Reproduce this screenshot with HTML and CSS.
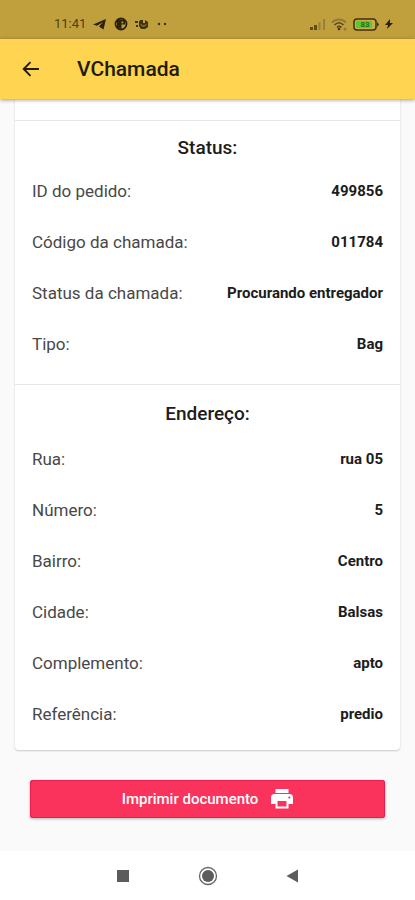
FILE: index.html
```html
<!DOCTYPE html>
<html lang="pt-BR">
<head>
<meta charset="utf-8">
<meta name="viewport" content="width=device-width, initial-scale=1">
<title>VChamada</title>
<link rel="stylesheet" href="styles.css">
</head>
<body>
<div class="statusbar">
  <div class="status-group">
    <span class="clock">11:41</span>
    <svg width="14" height="12" viewBox="0 0 14 12"><path d="M13 1 0 6.500l4 1.200L10 4 6 8.500l4.500 3z" fill="#2b230c"/></svg>
    <svg width="14" height="14" viewBox="0 0 14 14"><circle cx="7" cy="7" r="5.500" fill="none" stroke="#2b230c" stroke-width="1.800"/><path d="M3 2.500h4.500V12L3 10.500zM7 3h4v4.500H7z" fill="#2b230c"/><path d="M7.500 4.500h1.800v1.800H7.500z" fill="#c0a03c"/></svg>
    <svg width="14" height="12" viewBox="0 0 14 12"><path d="M0 3h3v2H0zM1 7h2v2H1zM5 2h3v3h2V2l3 2v5l-3 2H6L4 8V4z" fill="#40340f"/><path d="M6 6.500c1 2 4 2 5 0" fill="none" stroke="#c0a03c"/></svg>
    <svg class="dots" width="12" height="4" viewBox="0 0 12 4"><circle cx="3" cy="2" r="1.200" fill="#40340f"/><circle cx="9" cy="2" r="1.200" fill="#40340f"/></svg>
  </div>
  <div class="status-group status-right">
    <svg width="16" height="12" viewBox="0 0 16 12"><path d="M0 9h3v3H0zM4 7h3v5H4z" fill="#5e4e1c"/><path d="M8.500 4h2v8h-2zM13 1h2v11h-2z" fill="#99803a"/></svg>
    <svg width="17" height="13" viewBox="0 0 17 13"><path d="M1 4.500c4-4 10-4 14 0" fill="none" stroke="#94793a" stroke-width="2"/><path d="M3.500 7c3-3 6-3 9 0M6 9.500c1.500-1.500 3-1.500 4.500 0" fill="none" stroke="#594816" stroke-width="1.600"/><circle cx="8" cy="11" r="1.300" fill="#40340f"/><circle cx="14" cy="11" r="1.500" fill="#94793a"/></svg>
    <svg width="27" height="13" viewBox="0 0 27 13"><rect x="1" y="1" width="22" height="11" rx="3" fill="#c7b04a" stroke="#40300c" stroke-width="1.500"/><rect x="3" y="3" width="16" height="7" rx="1" fill="#54cb34"/><path d="M24 4l2 2.500L24 9z" fill="#40300c"/><text x="12" y="9" text-anchor="middle" class="battery-text">83</text></svg>
    <svg width="8" height="12" viewBox="0 0 8 12"><path d="M5 1 0 7h3l-1 4 6-6H5z" fill="#2b230c"/></svg>
  </div>
</div>
<header class="appbar">
  <button class="back" type="button" aria-label="Voltar">
    <svg width="18" height="16" viewBox="0 0 18 16"><path d="M17 8H2M8.500 1.200 1.700 8l6.800 6.800" fill="none" stroke="#211b0b" stroke-width="1.900"/></svg>
  </button>
  <h1>VChamada</h1>
</header>
<main>
  <div class="card">
    <section class="group">
      <h2>Status:</h2>
      <dl>
        <div class="row"><dt>ID do pedido:</dt><dd>499856</dd></div>
        <div class="row"><dt>Código da chamada:</dt><dd>011784</dd></div>
        <div class="row"><dt>Status da chamada:</dt><dd>Procurando entregador</dd></div>
        <div class="row"><dt>Tipo:</dt><dd>Bag</dd></div>
      </dl>
    </section>
    <section class="group address">
      <h2>Endereço:</h2>
      <dl>
        <div class="row"><dt>Rua:</dt><dd>rua 05</dd></div>
        <div class="row"><dt>Número:</dt><dd>5</dd></div>
        <div class="row"><dt>Bairro:</dt><dd>Centro</dd></div>
        <div class="row"><dt>Cidade:</dt><dd>Balsas</dd></div>
        <div class="row"><dt>Complemento:</dt><dd>apto</dd></div>
        <div class="row"><dt>Referência:</dt><dd>predio</dd></div>
      </dl>
    </section>
  </div>
  <button class="print" type="button">
    <span>Imprimir documento</span>
    <svg width="22" height="20" viewBox="0 0 22 20"><path d="M4.500 0h13v4h-13zM3.500 5h15A3.500 3.500 0 0 1 22 8.500V15h-4.500v4.500h-13V15H0V8.500A3.500 3.500 0 0 1 3.500 5z" fill="#fff"/><path d="M6.500 12h9v5.500h-9z" fill="#f9335c"/><circle cx="18.300" cy="8.500" r="1.100" fill="#f9335c"/></svg>
  </button>
</main>
<nav class="navbar">
  <button type="button" aria-label="Recentes"><svg width="20" height="20" viewBox="0 0 20 20"><path d="M4 4h12v12H4z" fill="#5c5c5c"/></svg></button>
  <button type="button" aria-label="Início"><svg width="20" height="20" viewBox="0 0 20 20"><circle cx="10" cy="10" r="8.500" fill="none" stroke="#666" stroke-width="1.300"/><circle cx="10" cy="10" r="6" fill="#5c5c5c"/></svg></button>
  <button type="button" aria-label="Voltar ao anterior"><svg width="20" height="20" viewBox="0 0 20 20"><path d="M15 3.500v13L3.500 10z" fill="#5c5c5c"/></svg></button>
</nav>
</body>
</html>
```
FILE: styles.css
```css
* {
  box-sizing: border-box;
}

body {
  margin: 0;
  min-height: 100vh;
  display: flex;
  flex-direction: column;
  background: #fafafa;
  color: #1c1c1c;
  font-family: Roboto, sans-serif;
}

button {
  border: 0;
  padding: 0;
  background: none;
  font: inherit;
  cursor: pointer;
}

svg {
  display: block;
  flex: none;
}

.statusbar {
  display: flex;
  justify-content: space-between;
  align-items: flex-end;
  height: 39px;
  padding: 0 22px 8px 54px;
  background: #c0a03c;
}

.status-group {
  display: flex;
  align-items: center;
  gap: 7px;
  height: 14px;
}

.status-right {
  gap: 5px;
}

.clock {
  color: #4d3f16;
  font-size: 13px;
  line-height: 14px;
}

.battery-text {
  fill: #2c6b1a;
  font-size: 8px;
  font-weight: 700;
}

.appbar {
  position: relative;
  display: flex;
  align-items: center;
  height: 60px;
  padding: 0 22px;
  background: #ffd450;
  box-shadow: 0 1px 4px rgba(0, 0, 0, 0.4);
}

.back {
  margin-right: 37px;
}

h1 {
  margin: 0;
  color: #211b0b;
  font-size: 21px;
  line-height: 28px;
  font-weight: 500;
}

main {
  flex: 1;
  padding: 0 15px 32px;
}

.card {
  padding-top: 21px;
  background: #fff;
  border-radius: 0 0 4px 4px;
  box-shadow: 0 1px 2px rgba(0, 0, 0, 0.2);
}

.group {
  padding: 13px 17px 15px;
  border-top: 1px solid #e6e6e6;
}

.address {
  padding: 15px 17px 11px;
}

h2 {
  margin: 0 0 3px;
  font-size: 19px;
  line-height: 28px;
  font-weight: 500;
  text-align: center;
}

.address h2 {
  margin-bottom: 5px;
}

dl {
  margin: 0;
}

.row {
  display: flex;
  justify-content: space-between;
  align-items: center;
  height: 51px;
}

dt {
  color: #484848;
  font-size: 17px;
}

dd {
  margin: 0;
  font-size: 15px;
  font-weight: 700;
}

.print {
  display: flex;
  justify-content: center;
  align-items: center;
  gap: 13px;
  width: calc(100% - 30px);
  height: 38px;
  margin: 30px 15px 0;
  border-radius: 3px;
  background: #f9335c;
  box-shadow: inset 0 0 0 1px #e91e50, 0 1px 3px rgba(0, 0, 0, 0.3);
  color: #fff;
  font-size: 15px;
  font-weight: 500;
}

.navbar {
  display: flex;
  justify-content: center;
  align-items: center;
  gap: 65px;
  height: 49px;
  background: #fff;
}
```
